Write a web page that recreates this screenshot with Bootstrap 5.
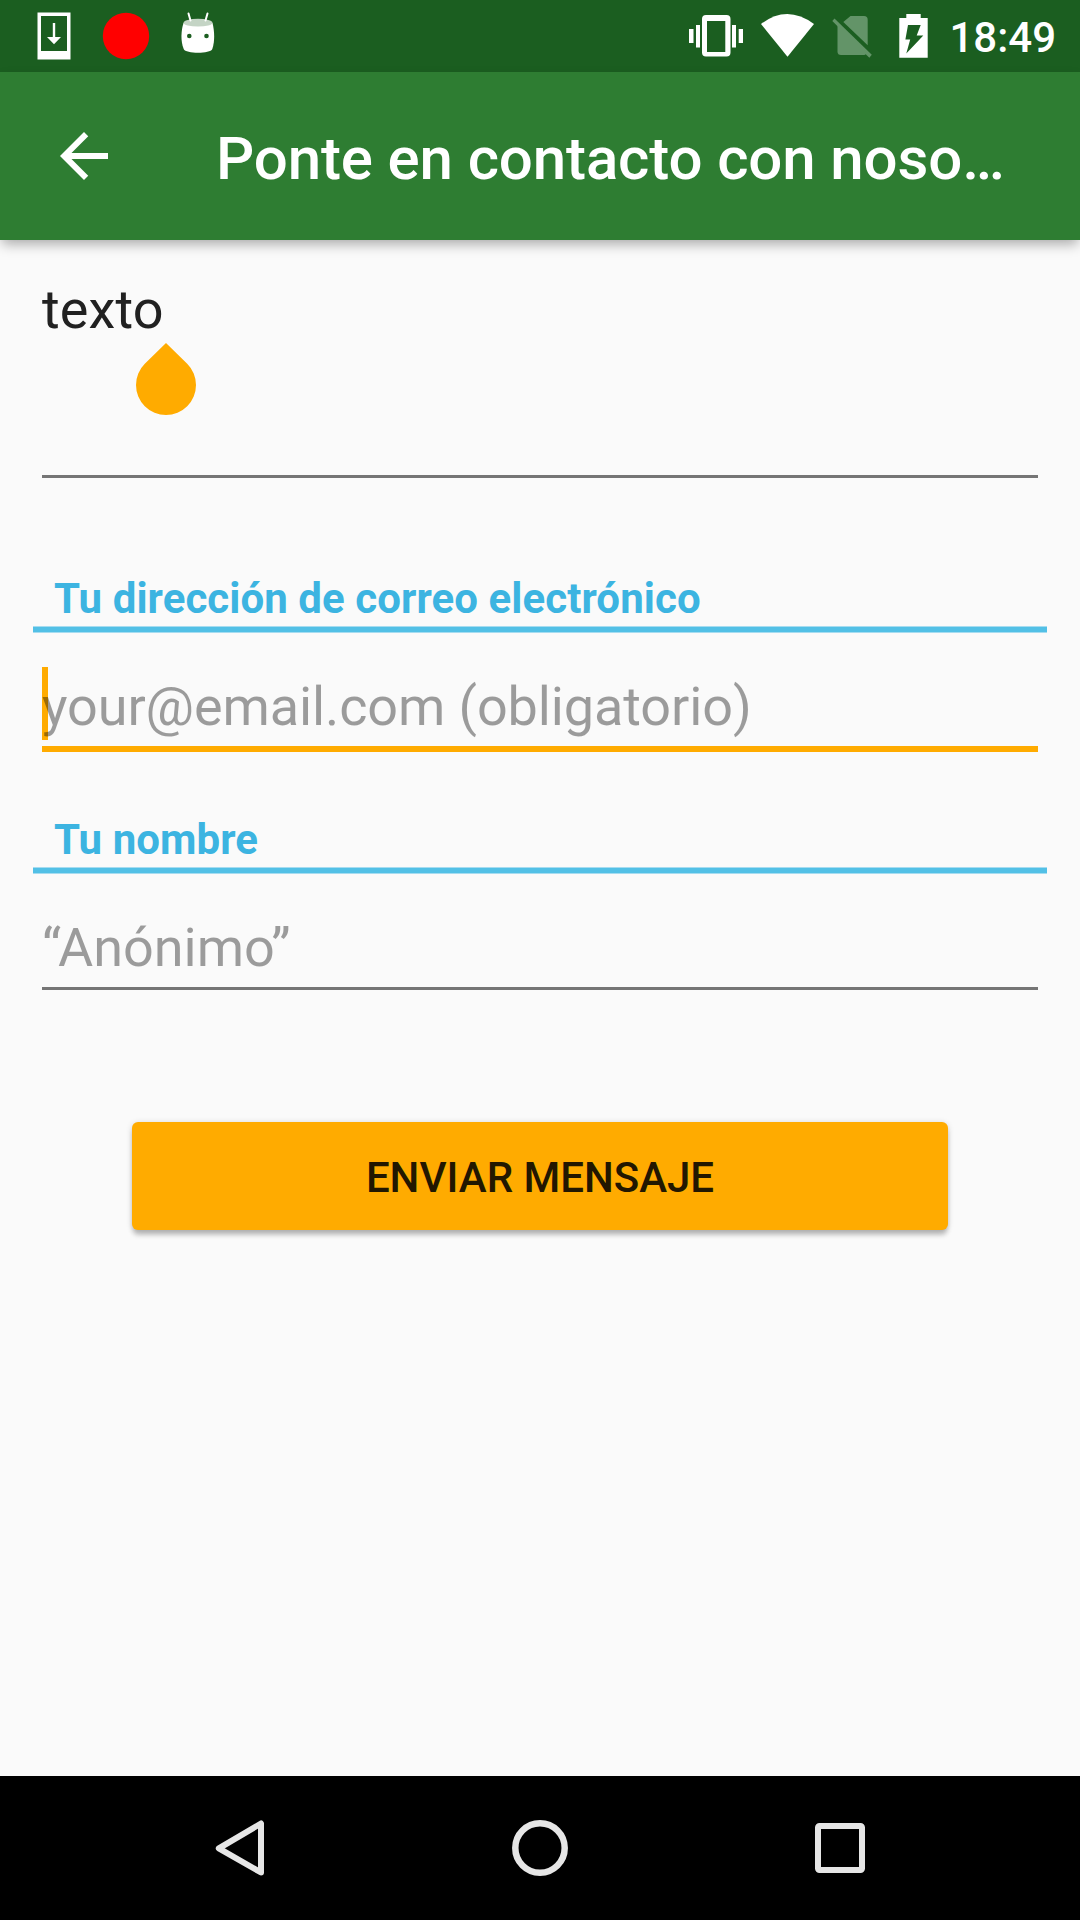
<!DOCTYPE html>
<html lang="es">
<head>
<meta charset="utf-8">
<meta name="viewport" content="width=device-width, initial-scale=1">
<title>Ponte en contacto</title>
<link href="https://cdn.jsdelivr.net/npm/bootstrap@5.3.0/dist/css/bootstrap.min.css" rel="stylesheet">
<style>
  body { font-family: Roboto, "Noto Sans", sans-serif; background: #fafafa; height: 1920px; overflow: hidden; }
  svg { display: block; flex: none; }
  .status-bar { height: 72px; background: #1b5e20; }
  .status-left { margin-left: 36px; gap: 30px; }
  .status-right { margin-right: 24px; }
  .clock { font-size: 42px; font-weight: 500; line-height: 49px; margin-left: 19px; padding-top: 2px; }
  .app-bar { height: 168px; background: #2e7d32; padding: 0 0 0 48px; box-shadow: 0 6px 12px -2px rgba(0,0,0,.33); z-index: 1; }
  .app-title { font-size: 60px; font-weight: 500; line-height: 70px; letter-spacing: -.13px; margin-left: 96px; padding-top: 6px; }
  .contact-form { padding: 38px 33px 0; }
  .field { width: 996px; margin: 0 9px; display: block; background-color: transparent !important; border: 0; border-radius: 0; border-bottom: 3px solid #757575; font-size: 54px; line-height: 63px; color: #212121; }
  .field::placeholder { color: rgba(0,0,0,.38); opacity: 1; }
  .field-message { height: 200px; padding: 0; resize: none; overflow: hidden; letter-spacing: .15px; }
  .field-line { height: 116px; padding: 42px 0 8px; }
  .field-active { height: 119px; border-bottom: 6px solid #ffab00; letter-spacing: -.11px; background: linear-gradient(#ffab00,#ffab00) 0 34px / 6px 73px no-repeat; }
  .heading { display: block; height: 59px; margin: 0; padding-left: 21px; font-size: 42px; font-weight: 700; line-height: 49px; letter-spacing: .07px; color: #3cb4e1;
    background: linear-gradient(#a6dcf0 1px,#52c0e6 1px,#52c0e6 6px,#a6dcf0 6px) 0 52px / 100% 7px no-repeat; }
  .heading-first { margin-top: 96px; }
  .heading-next { margin-top: 63px; }
  .handle { position: absolute; left: 136px; top: 342px; }
  .btn-send, .btn-send:hover { width: 816px; height: 108px; margin: 132px auto 0; padding: 2px 0 0; border: 0; border-radius: 6px; background: #ffab00; color: #221700; font-size: 42px; font-weight: 500; line-height: 49px; box-shadow: 0 6px 5px -1px rgba(0,0,0,.22), 0 1px 6px rgba(0,0,0,.16); }
  .nav-keys { height: 144px; background: #000; gap: 228px; }
</style>
</head>
<body class="d-flex flex-column position-relative">
<header class="status-bar d-flex justify-content-between align-items-center text-white">
  <div class="status-left d-flex">
    <svg width="36" height="72" viewBox="36 0 36 72"><path fill="#fff" fill-rule="evenodd" d="M37.5 12.5h33v47h-33zM41 16v35h26V16z"/><path fill="#fff" d="M52.8 23h2.4v14H61l-7 7.3L47 37h5.8z"/></svg>
    <svg width="48" height="72" viewBox="102 0 48 72"><circle cx="126" cy="36" r="23.2" fill="#f00"/></svg>
    <svg width="36" height="72" viewBox="180 0 36 72"><path fill="#fff" d="M183.5 23h29c2 8 2.500 18-.2 26-2 5-26.600 5-28.600 0-3.200-8-2.700-18-.2-26z"/><ellipse cx="198" cy="22.700" rx="14.500" ry="3.900" fill="#c4d4c5"/><path d="M188.500 13.500l2 7M207.500 13.500l-2 7" stroke="#fff" stroke-width="2" stroke-linecap="round"/><circle cx="189.300" cy="36" r="2.300" fill="#1b5e20"/><circle cx="206.500" cy="36" r="2.300" fill="#1b5e20"/></svg>
  </div>
  <div class="status-right d-flex align-items-center">
    <svg width="242" height="72" viewBox="688 0 242 72">
      <path fill="#fff" fill-rule="evenodd" d="M706 15h20.500a4 4 0 0 1 4 4v33.500a4 4 0 0 1-4 4H706a4 4 0 0 1-4-4V19a4 4 0 0 1 4-4zm1 6v31h18.300V21z"/>
      <path fill="#fff" d="M696 25h4v22.500h-4zM689 29h4.500v14H689zM732 25h4v22.500h-4zM738.700 29h4.300v14h-4.300z"/>
      <path fill="#fff" d="M787.500 56.700L761 24q26-20 53 0z"/>
      <g fill="#639468"><path d="M850.5 16H864q3.700 0 3.700 3.700V45.300L843.300 22z"/><path d="M837.5 24L867 53.500 864.500 55H841q-3.500 0-3.500-3.500z"/><path d="M834.500 18.500l37.300 36.200-2.500 3L832.300 21z"/></g>
      <path fill="#fff" fill-rule="evenodd" d="M906.300 14h14.400v4h7v39.700h-28.400V18h7zM908 25l-2.600 14.500h4.800L906.300 53.500 923.300 35.500h-6.600L920.700 25z"/>
    </svg>
    <div class="clock">18:49</div>
  </div>
</header>
<nav class="app-bar navbar flex-nowrap justify-content-start text-white">
  <svg width="72" height="72" viewBox="0 0 24 24" fill="#fff"><path d="M20 11H7.830l5.590-5.590L12 4l-8 8 8 8 1.410-1.410L7.830 13H20z"/></svg>
  <div class="app-title text-nowrap">Ponte en contacto con noso…</div>
</nav>
<main class="flex-grow-1">
  <form class="contact-form">
    <textarea class="form-control field field-message" aria-label="Mensaje" spellcheck="false">texto</textarea>
    <label class="heading heading-first" for="email">Tu dirección de correo electrónico</label>
    <input class="form-control field field-line field-active" id="email" type="text" placeholder="your@email.com (obligatorio)">
    <label class="heading heading-next" for="nombre">Tu nombre</label>
    <input class="form-control field field-line" id="nombre" type="text" placeholder="“Anónimo”">
    <button class="btn btn-send d-block" type="button">ENVIAR MENSAJE</button>
  </form>
</main>
<svg class="handle" width="60" height="74" viewBox="0 0 60 74"><path fill="#ffab00" d="M30 1L51.200 21.800A30 30 0 1 1 8.800 21.800z"/></svg>
<footer class="nav-keys d-flex justify-content-center align-items-center">
  <svg width="72" height="72" viewBox="0 0 72 72" fill="none" stroke="#e6e6e6" stroke-width="6" stroke-linejoin="round"><path d="M14.800 36.300L57 11.500v49z"/></svg>
  <svg width="72" height="72" viewBox="0 0 72 72" fill="none" stroke="#e6e6e6" stroke-width="6.500"><circle cx="36" cy="36" r="24.700"/></svg>
  <svg width="72" height="72" viewBox="0 0 72 72" fill="none" stroke="#e6e6e6" stroke-width="6"><rect x="14" y="14" width="44" height="44" rx="1.500"/></svg>
</footer>
<script src="https://cdn.jsdelivr.net/npm/bootstrap@5.3.0/dist/js/bootstrap.bundle.min.js"></script>
</body>
</html>
